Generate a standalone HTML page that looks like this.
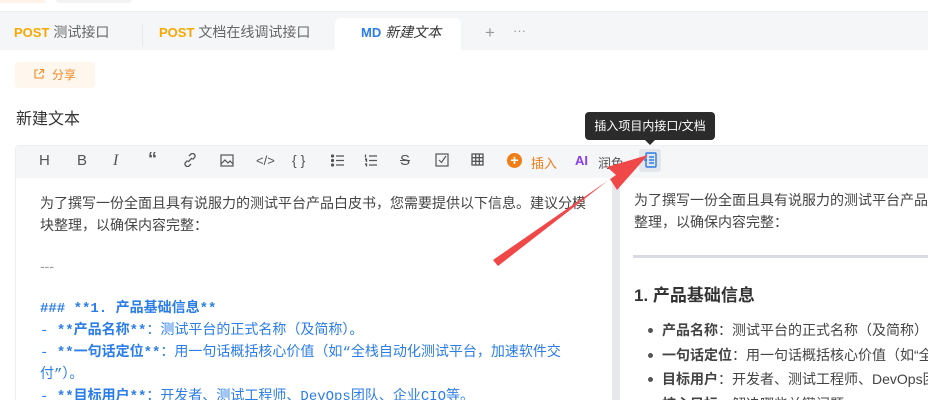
<!DOCTYPE html>
<html><head><meta charset="utf-8"><style>
*{margin:0;padding:0;box-sizing:border-box}
html,body{width:928px;height:400px;overflow:hidden}
body{background:#fff;font-family:"Liberation Sans","Noto Sans CJK SC",sans-serif;position:relative;color:#333}
.abs{position:absolute}
.tabbar{left:0;top:11px;width:928px;height:39px;background:#f5f6f8;border-top:1px solid #eceef1}
.tab{top:11px;height:39px;line-height:42px;font-size:14px;color:#666;white-space:nowrap}
.tab b{font-weight:bold;color:#f7a800;margin-right:4px;font-size:13px}
.tb{font-size:14px;color:#555;top:152px}
.lt{font-size:14px;line-height:22px;color:#444;white-space:nowrap}
.bl{color:#2b7de9;font-family:"Liberation Mono","Noto Sans CJK SC",monospace;font-size:14px}
.clip{overflow:hidden}
ul{list-style:none}
ul li{position:relative;padding-left:16px;line-height:24.5px}
ul li:before{content:"";position:absolute;left:2px;top:10px;width:5px;height:5px;border-radius:50%;background:#555}
</style></head><body>
<div class="abs" style="left:0;top:0;width:45px;height:3px;background:#fff3e8"></div>
<div class="abs" style="left:56px;top:0;width:76px;height:3px;background:#f2f3f5;border-radius:0 0 4px 4px"></div>
<div class="abs tabbar"></div>
<div class="abs tab" style="left:14px"><b>POST</b>测试接口</div>
<div class="abs" style="left:142px;top:24px;width:1px;height:22px;background:#e8e8e8"></div>
<div class="abs tab" style="left:159px"><b>POST</b>文档在线调试接口</div>
<div class="abs" style="left:335px;top:18px;width:126px;height:32px;background:#fff;border-radius:6px 6px 0 0"></div>
<div class="abs tab" style="left:361px;color:#333;font-style:italic"><b style="color:#2b7de9;font-style:normal">MD</b>新建文本</div>
<div class="abs" style="left:485px;top:23px;font-size:17px;color:#999">+</div>
<div class="abs" style="left:513px;top:23px;font-size:13px;color:#999">···</div>
<div class="abs" style="left:15px;top:62px;width:80px;height:26px;background:#fff6ee;border-radius:4px;color:#f08a24;font-size:12px;line-height:26px;padding-left:18px">
<svg width="12" height="12" viewBox="0 0 12 12" style="vertical-align:-1px;margin-right:7px"><path d="M5 2H2v8h8V7M7 1.5h3.5V5M10.5 1.5L6 6" fill="none" stroke="#f08a24" stroke-width="1.1"/></svg>分享</div>
<div class="abs" style="left:16px;top:105px;font-size:16px;color:#333">新建文本</div>
<div class="abs" style="left:15px;top:145px;width:913px;height:260px;border:1px solid #eceef1;border-right:0;border-radius:4px 0 0 4px"></div>
<div class="abs" style="left:16px;top:146px;width:912px;height:32px;background:#f5f6f8"></div>
<div class="abs tb" style="left:39px;font-size:15px">H</div>
<div class="abs tb" style="left:77px;font-size:15px">B</div>
<div class="abs tb" style="left:113px;font-style:italic;font-family:'Liberation Serif',serif;font-size:16px">I</div>
<div class="abs tb" style="left:148px;font-size:18px;font-weight:bold;top:149px">“</div>
<svg class="abs" style="left:183px;top:153px" width="14" height="14" viewBox="0 0 14 14" fill="none" stroke="#555" stroke-width="1.3"><path d="M6 3l2-2a2.5 2.5 0 013.5 3.5L9.5 6.5M8 11l-2 2A2.5 2.5 0 012.5 9.5L4.5 7.5M5 9l4-4"/></svg>
<svg class="abs" style="left:220px;top:154px" width="14" height="13" fill="none" stroke="#555" stroke-width="1.2"><rect x="1" y="1" width="12" height="11"/><path d="M1 10l4-4 3 3 2-2 3 3"/></svg>
<div class="abs tb" style="left:256px;font-size:13px;top:153px">&lt;/&gt;</div>
<div class="abs tb" style="left:292px;font-size:14px">{ }</div>
<svg class="abs" style="left:331px;top:154px" width="13" height="13" stroke="#555" stroke-width="1.3"><path d="M5 2h8M5 6.5h8M5 11h8"/><circle cx="1.5" cy="2" r="1" fill="#555"/><circle cx="1.5" cy="6.5" r="1" fill="#555"/><circle cx="1.5" cy="11" r="1" fill="#555"/></svg>
<svg class="abs" style="left:364px;top:154px" width="13" height="13" stroke="#555" stroke-width="1.3"><path d="M5 2h8M5 6.5h8M5 11h8M1.5 0.5v3M1 5h1.5v3M1 10h1.5v2.5"/></svg>
<div class="abs tb" style="left:400px;text-decoration:line-through;font-size:15px">S</div>
<svg class="abs" style="left:435px;top:153px" width="14" height="14" fill="none" stroke="#555" stroke-width="1.2"><rect x="1" y="1" width="12" height="12"/><path d="M4 7l2.5 2.5L11 3"/></svg>
<svg class="abs" style="left:471px;top:153px" width="13" height="13" fill="none" stroke="#555" stroke-width="1.3"><rect x="1" y="1" width="11" height="11"/><path d="M4.7 1v11M8.3 1v11M1 4.7h11M1 8.3h11"/></svg>
<div class="abs" style="left:507px;top:153px;width:15px;height:15px;border-radius:50%;background:#f07d16;color:#fff;font-size:14px;font-weight:bold;line-height:15px;text-align:center">+</div>
<div class="abs tb" style="left:531px;color:#f07d16;font-size:13px;top:153px">插入</div>
<div class="abs" style="left:575px;top:153px;font-size:13px;font-weight:bold;color:#8a3cf0">AI</div>
<div class="abs tb" style="left:598px;font-size:13px;top:153px">润色</div>
<div class="abs" style="left:639px;top:149px;width:22px;height:23px;background:#e3e6ea;border-radius:3px"></div>
<svg class="abs" style="left:643px;top:152px" width="14" height="16" fill="none" stroke="#2b7de9" stroke-width="1.4"><rect x="3" y="1" width="10" height="14" rx="1"/><path d="M6 5h5M6 8h5M6 11h5M1 8h3"/></svg>
<div class="abs" style="left:585px;top:112px;width:130px;height:28px;background:#2b2b2b;border-radius:4px;color:#fff;font-size:12px;line-height:28px;text-align:center">插入项目内接口/文档</div>
<div class="abs" style="left:645px;top:140px;border:5px solid transparent;border-top-color:#2b2b2b;border-bottom:0"></div>
<div class="abs" style="left:612px;top:178px;width:8px;height:222px;background:#e6e8ec"></div>
<div class="abs clip" style="left:40px;top:192px;width:560px;height:208px">
<div class="lt">为了撰写一份全面且具有说服力的测试平台产品白皮书，您需要提供以下信息。建议分模<br>块整理，以确保内容完整：</div>
<div class="lt" style="margin-top:19px;color:#999">---</div>
<div class="lt bl" style="margin-top:21px"><b>### **1. 产品基础信息**</b><br>- <b>**产品名称**</b>：测试平台的正式名称（及简称）。<br>- <b>**一句话定位**</b>：用一句话概括核心价值（如“全栈自动化测试平台，加速软件交<br>付”）。<br>- <b>**目标用户**</b>：开发者、测试工程师、DevOps团队、企业CIO等。</div>
</div>
<div class="abs clip" style="left:634px;top:189px;width:294px;height:211px">
<div class="lt">为了撰写一份全面且具有说服力的测试平台产品白皮书<br>整理，以确保内容完整：</div>
</div>
<div class="abs" style="left:633px;top:255px;width:295px;height:3px;background:#d8dce2"></div>
<div class="abs" style="left:634px;top:281px;font-size:17px;font-weight:bold;color:#333;white-space:nowrap">1. 产品基础信息</div>
<div class="abs clip" style="left:646px;top:318px;width:282px;height:82px">
<ul class="lt"><li><b>产品名称</b>：测试平台的正式名称（及简称）</li><li><b>一句话定位</b>：用一句话概括核心价值（如“全栈自动化</li><li><b>目标用户</b>：开发者、测试工程师、DevOps团队</li><li><b>核心目标</b>：解决哪些关键问题</li></ul>
</div>
<svg class="abs" style="left:0;top:0" width="928" height="400"><polygon points="493,260 498,266 610,179 617,190 648,155 607,167 616,175" fill="#f04848"/></svg>
</body></html>
